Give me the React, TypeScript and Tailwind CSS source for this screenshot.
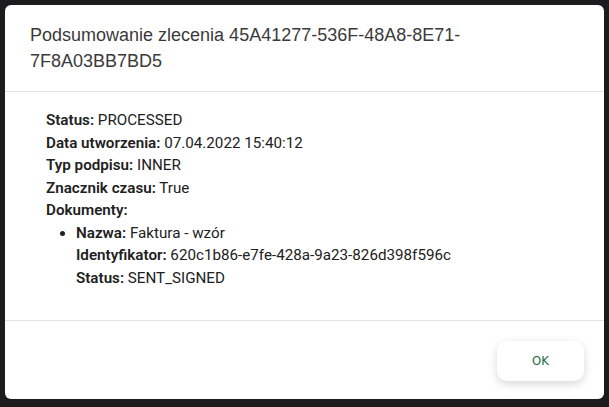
import React from 'react';

const rows: [string, string][] = [
  ['Status', 'PROCESSED'],
  ['Data utworzenia', '07.04.2022 15:40:12'],
  ['Typ podpisu', 'INNER'],
  ['Znacznik czasu', 'True'],
];

const doc: [string, string][] = [
  ['Nazwa', 'Faktura - wzór'],
  ['Identyfikator', '620c1b86-e7fe-428a-9a23-826d398f596c'],
  ['Status', 'SENT_SIGNED'],
];

export default function App() {
  return (
    <div className="h-[407px] w-[609px] bg-[#1c1c1e] p-[5px] pb-[8px] pr-[5px]">
      <div className="flex h-full flex-col rounded-md bg-white">
        <div className="border-b border-[#e3e3e3] px-[25px] pt-[17px] pb-[17px] pr-[120px]">
          <h2 className="text-[18px] leading-[26px] text-[#3a3a3a] [font-family:'Liberation_Sans',Arial,sans-serif]">
            Podsumowanie zlecenia 45A41277-536F-48A8-8E71-7F8A03BB7BD5
          </h2>
        </div>
        <div className="flex-1 border-b border-[#e3e3e3] pl-[41px] pt-[17px] text-[15.2px] leading-[22.5px] text-[#212121] [font-family:Roboto,sans-serif]">
          {rows.map(([k, v]) => (
            <div key={k}>
              <span className="font-semibold">{k}:</span> {v}
            </div>
          ))}
          <div className="font-semibold">Dokumenty:</div>
          <ul className="list-disc pl-[30px]">
            <li>
              {doc.map(([k, v]) => (
                <div key={k}>
                  <span className="font-semibold">{k}:</span> {v}
                </div>
              ))}
            </li>
          </ul>
        </div>
        <div className="flex justify-end px-[20px] pt-[20px] pb-[18px]">
          <button className="h-[40px] w-[87px] rounded-[10px] bg-white text-[13px] text-[#1b6b48] shadow-[0_3px_10px_rgba(0,0,0,0.16)] [font-family:'DejaVu_Sans_Condensed','Noto_Sans',sans-serif]">
            OK
          </button>
        </div>
      </div>
    </div>
  );
}
